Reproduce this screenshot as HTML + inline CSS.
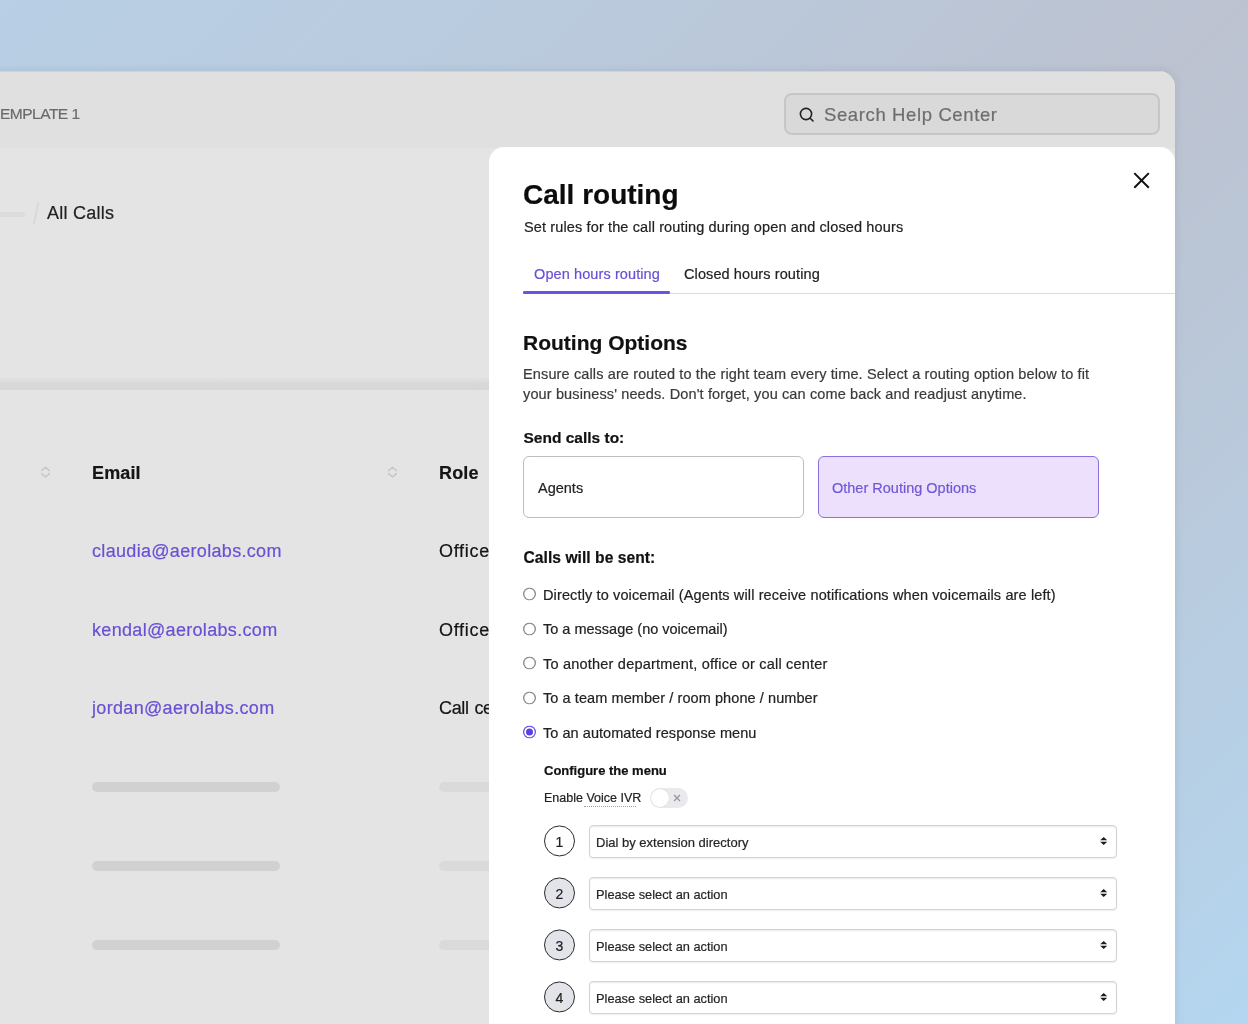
<!DOCTYPE html>
<html lang="en">
<head>
<meta charset="utf-8">
<title>Call routing</title>
<style>
*{box-sizing:border-box;margin:0;padding:0}
html,body{width:1248px;height:1024px;overflow:hidden}
body{font-family:"Liberation Sans",sans-serif;position:relative;
background:linear-gradient(135deg,#b8cfe5 0%,#bacadc 28%,#bcc2d0 55%,#b9cadc 75%,#b4d6f0 100%);}
.abs{position:absolute;white-space:nowrap}
#win,#panel{will-change:transform}
#win{position:absolute;left:-20px;top:71px;width:1195px;height:980px;background:#e4e4e4;border-radius:16px 16px 0 0;overflow:hidden;box-shadow:0 0 9px rgba(40,50,70,.11)}
#win::after{content:"";position:absolute;left:0;top:0;width:100%;height:1px;background:rgba(190,200,216,.55)}
#topbar{position:absolute;left:0;top:0;width:100%;height:76.5px;background:#e0e0e0}
#search{position:absolute;left:804px;top:22px;width:376px;height:42px;border:2px solid #c6c6c6;border-radius:8px;background:#d9d9d9}
#band{position:absolute;left:0;top:306.5px;width:100%;height:12.5px;background:linear-gradient(#e1e1e1 0%,#d9d9d9 45%,#d6d6d6 100%)}
#panel{position:absolute;left:489px;top:147px;width:686px;height:900px;background:#fff;border-radius:15px 15px 0 0;overflow:hidden}
.t{position:absolute;white-space:nowrap;line-height:1;-webkit-text-stroke:.2px}
.email{color:#6a50d3;font-size:18px;letter-spacing:.32px}
.cell{color:#141414;font-size:18px;letter-spacing:.7px}
.ph{position:absolute;height:10px;border-radius:5px;background:#d1d1d1;margin-top:.5px}
.radio{position:absolute;width:13px;height:13px;border-radius:50%;background:#fff;box-shadow:inset 0 0 0 1.35px #8b8b8b;transform:translateY(-.5px)}
.rl{font-size:14.5px;color:#222}
.num{position:absolute;width:31px;height:31px;border:1.4px solid #2a2a2e;border-radius:50%;background:#e3e4e9;font-size:14px;color:#222;text-align:center;line-height:32.2px;text-indent:0;transform:translateY(.45px);-webkit-text-stroke:.2px}
.sel{position:absolute;left:100px;width:528px;height:33px;border:1px solid #d4d4d4;border-radius:4px;background:#fff;box-shadow:inset 0 1px 1.5px rgba(0,0,0,.09),0 1px 1.5px rgba(0,0,0,.07);font-size:12.8px;color:#262626;line-height:34.4px;padding-left:6px;-webkit-text-stroke:.2px}
.sel svg{position:absolute;right:8.7px;top:11.4px}
</style>
</head>
<body>
<div id="win">
  <div id="topbar"></div>
  <div class="t" style="left:20px;top:35px;font-size:15.5px;color:#6a6a6a;letter-spacing:-.5px">EMPLATE 1</div>
  <div id="search">
    <svg style="position:absolute;left:12px;top:11px" width="18" height="18" viewBox="0 0 18 18" fill="none" stroke="#222" stroke-width="1.6" stroke-linecap="round"><circle cx="8" cy="8" r="5.6"/><path d="M12.2 12.2 L15 15"/></svg>
    <div class="t" style="left:38px;top:11px;font-size:18.5px;color:#6e6e6e;letter-spacing:.62px">Search Help Center</div>
  </div>
  <div style="position:absolute;left:0;top:140.5px;width:45px;height:5px;border-radius:3px;background:#dcdcdc"></div>
  <div class="t" id="slash" style="left:52px;top:128px;font-size:30px;color:#d7d7d7;transform:scaleX(.75);-webkit-text-stroke:0">/</div>
  <div class="t" style="left:67px;top:133px;font-size:18px;color:#222;letter-spacing:.25px">All Calls</div>
  <div id="band"></div>

  <svg class="abs" style="left:60.3px;top:394px" width="11" height="14" viewBox="0 0 11 14" fill="none" stroke="#c6c6c6" stroke-width="1.4" stroke-linecap="round" stroke-linejoin="round"><path d="M1.6 5.6 L5.5 2.2 L9.4 5.6"/><path d="M1.6 8.6 L5.5 12 L9.4 8.6"/></svg>
  <div class="t" style="left:112px;top:393px;font-size:18px;font-weight:bold;color:#151515;letter-spacing:.15px">Email</div>
  <svg class="abs" style="left:407.3px;top:394px" width="11" height="14" viewBox="0 0 11 14" fill="none" stroke="#c6c6c6" stroke-width="1.4" stroke-linecap="round" stroke-linejoin="round"><path d="M1.6 5.6 L5.5 2.2 L9.4 5.6"/><path d="M1.6 8.6 L5.5 12 L9.4 8.6"/></svg>
  <div class="t" style="left:459px;top:393px;font-size:18px;font-weight:bold;color:#151515;letter-spacing:.15px">Role</div>

  <div class="t email" style="left:112px;top:471px">claudia@aerolabs.com</div>
  <div class="t cell" style="left:459px;top:471px">Office</div>
  <div class="t email" style="left:112px;top:550px">kendal@aerolabs.com</div>
  <div class="t cell" style="left:459px;top:550px">Office</div>
  <div class="t email" style="left:112px;top:628px">jordan@aerolabs.com</div>
  <div class="t cell" style="left:459px;top:628px;letter-spacing:-.35px;word-spacing:1.2px">Call center</div>

  <div class="ph" style="left:112px;top:710px;width:188px"></div>
  <div class="ph" style="left:459px;top:710px;width:120px;background:#dadada"></div>
  <div class="ph" style="left:112px;top:789px;width:188px"></div>
  <div class="ph" style="left:459px;top:789px;width:120px;background:#dadada"></div>
  <div class="ph" style="left:112px;top:868px;width:188px"></div>
  <div class="ph" style="left:459px;top:868px;width:120px;background:#dadada"></div>
</div>

<div id="panel">
  <svg class="abs" style="left:644px;top:25px" width="17" height="17" viewBox="0 0 17 17" fill="none" stroke="#111" stroke-width="2" stroke-linecap="butt"><path d="M1.3 1.1 L15.8 15.7 M15.8 1.1 L1.3 15.7"/></svg>
  <div class="t" style="left:34px;top:34.2px;font-size:28px;font-weight:bold;color:#0c0c0c">Call routing</div>
  <div class="t" style="left:35px;top:72.5px;font-size:14.5px;color:#222;letter-spacing:.13px">Set rules for the call routing during open and closed hours</div>
  <div class="t" style="left:45px;top:120px;font-size:14.5px;color:#6a50d3;letter-spacing:.1px">Open hours routing</div>
  <div class="t" style="left:195px;top:120px;font-size:14.5px;color:#222;letter-spacing:.1px">Closed hours routing</div>
  <div style="position:absolute;left:34px;top:146px;width:660px;height:1px;background:#dcdcdc"></div>
  <div style="position:absolute;left:34px;top:144.3px;width:147px;height:2.3px;background:#6d50e6;border-radius:1.2px"></div>

  <div class="t" style="left:34px;top:185px;font-size:21px;font-weight:bold;color:#111">Routing Options</div>
  <div class="t" style="left:34px;top:220px;font-size:14.5px;color:#3a3a3a;letter-spacing:.13px">Ensure calls are routed to the right team every time. Select a routing option below to fit</div>
  <div class="t" style="left:34px;top:240px;font-size:14.5px;color:#3a3a3a;letter-spacing:.13px">your business' needs. Don't forget, you can come back and readjust anytime.</div>

  <div class="t" style="left:34.5px;top:283px;font-size:15.5px;font-weight:bold;color:#111">Send calls to:</div>
  <div style="position:absolute;left:34px;top:309px;width:281px;height:62px;border:1px solid #bdbdbd;border-radius:6px;background:#fff"></div>
  <div class="t" style="left:49px;top:334px;font-size:14.5px;color:#222">Agents</div>
  <div style="position:absolute;left:329px;top:309px;width:281px;height:62px;border:1px solid #8a70de;border-radius:6px;background:#ece0fc"></div>
  <div class="t" style="left:343px;top:334px;font-size:14.5px;color:#7058d6">Other Routing Options</div>

  <div class="t" style="left:34.5px;top:403px;font-size:15.6px;font-weight:bold;color:#111;letter-spacing:.05px">Calls will be sent:</div>

  <div class="radio" style="left:34px;top:441px"></div>
  <div class="t rl" style="left:54px;top:440.5px;letter-spacing:.13px">Directly to voicemail (Agents will receive notifications when voicemails are left)</div>
  <div class="radio" style="left:34px;top:475.5px"></div>
  <div class="t rl" style="left:54px;top:474.5px">To a message (no voicemail)</div>
  <div class="radio" style="left:34px;top:510px"></div>
  <div class="t rl" style="left:54px;top:509.5px;letter-spacing:.21px">To another department, office or call center</div>
  <div class="radio" style="left:34px;top:544.5px"></div>
  <div class="t rl" style="left:54px;top:543.5px;letter-spacing:.08px">To a team member / room phone / number</div>
  <div class="radio" style="left:34px;top:579px;box-shadow:inset 0 0 0 1.25px #6d50e6"><div style="position:absolute;left:2.75px;top:2.75px;width:7.5px;height:7.5px;border-radius:50%;background:#5d40e0"></div></div>
  <div class="t rl" style="left:54px;top:579px;letter-spacing:.05px">To an automated response menu</div>

  <div class="t" style="left:55px;top:617px;font-size:13px;font-weight:bold;color:#111">Configure the menu</div>
  <div class="t" style="left:55px;top:644.7px;font-size:12.5px;color:#222">Enable Voice IVR</div>
  <div style="position:absolute;left:95px;top:658.6px;width:52px;height:0;border-top:1.3px dotted #a2a2a2"></div>
  <div style="position:absolute;left:161px;top:641px;width:38px;height:20px;border-radius:10px;background:#eaeaee">
    <div style="position:absolute;left:1px;top:1px;width:18px;height:18px;border-radius:50%;background:#fff;box-shadow:0 0 1.5px rgba(0,0,0,.13)"></div>
    <svg style="position:absolute;left:23px;top:6px" width="8" height="8" viewBox="0 0 8 8" stroke="#94949c" stroke-width="1.3" fill="none"><path d="M1 1 L7 7 M7 1 L1 7"/></svg>
  </div>

  <div class="num" style="left:55px;top:678px;background:#fff">1</div>
  <div class="sel" style="top:678px;font-size:13px">Dial by extension directory<svg width="7.4" height="8" viewBox="0 0 7.4 8" fill="#1c1c1c"><path d="M3.7 0 L7.2 3.3 L0.2 3.3 Z M3.7 8 L7.2 4.7 L0.2 4.7 Z"/></svg></div>
  <div class="num" style="left:55px;top:730px">2</div>
  <div class="sel" style="top:730px">Please select an action<svg width="7.4" height="8" viewBox="0 0 7.4 8" fill="#1c1c1c"><path d="M3.7 0 L7.2 3.3 L0.2 3.3 Z M3.7 8 L7.2 4.7 L0.2 4.7 Z"/></svg></div>
  <div class="num" style="left:55px;top:782px">3</div>
  <div class="sel" style="top:782px">Please select an action<svg width="7.4" height="8" viewBox="0 0 7.4 8" fill="#1c1c1c"><path d="M3.7 0 L7.2 3.3 L0.2 3.3 Z M3.7 8 L7.2 4.7 L0.2 4.7 Z"/></svg></div>
  <div class="num" style="left:55px;top:834px">4</div>
  <div class="sel" style="top:834px">Please select an action<svg width="7.4" height="8" viewBox="0 0 7.4 8" fill="#1c1c1c"><path d="M3.7 0 L7.2 3.3 L0.2 3.3 Z M3.7 8 L7.2 4.7 L0.2 4.7 Z"/></svg></div>
</div>
</body>
</html>
